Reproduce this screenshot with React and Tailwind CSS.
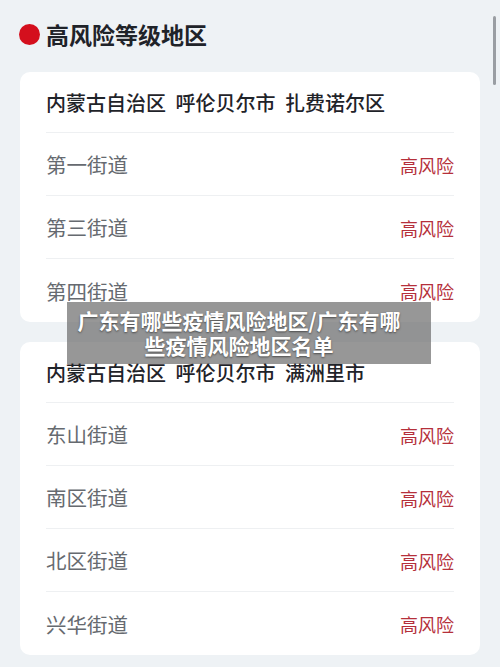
import React from "react";

const font = { fontFamily: '"Noto Sans CJK SC", "Noto Sans", sans-serif' };

const cards = [
  {
    title: "内蒙古自治区 呼伦贝尔市 扎费诺尔区",
    rows: ["第一街道", "第三街道", "第四街道"],
  },
  {
    title: "内蒙古自治区 呼伦贝尔市 满洲里市",
    rows: ["东山街道", "南区街道", "北区街道", "兴华街道"],
  },
];

function Card({ title, rows }) {
  return (
    <div className="bg-white rounded-[10px] mx-[20px] px-[26px]">
      <div className="h-[61px] flex items-center border-b border-[#eef0f2] text-[20px] font-medium text-[#1f2329] leading-none pt-[1px] [word-spacing:5px]">
        {title}
      </div>
      {rows.map((r, i) => (
        <div
          key={r}
          className={
            "h-[63px] flex items-center justify-between " +
            (i < rows.length - 1 ? "border-b border-[#eef0f2]" : "")
          }
        >
          <span className="text-[20.5px] text-[#666a70] leading-none pt-[1px]">{r}</span>
          <span className="text-[18px] text-[#b5303b] leading-none pt-[1px]">高风险</span>
        </div>
      ))}
    </div>
  );
}

export default function App() {
  return (
    <div className="relative w-[500px] h-[667px] bg-[#eef2f5] overflow-hidden" style={font}>
      <div className="absolute right-[4px] top-[16px] w-[3px] h-[69px] rounded-full bg-[#9a9ea3]" />
      <div className="flex items-center h-[70px] pl-[19px] pb-[2px]">
        <span className="w-[21px] h-[21px] rounded-full bg-[#d40f1d] mr-[6px]" />
        <span className="text-[23px] font-semibold text-[#1f2329] leading-none">高风险等级地区</span>
      </div>
      <div className="flex flex-col gap-[20px] pt-[2px]">
        {cards.map((c) => (
          <Card key={c.title} {...c} />
        ))}
      </div>
      <div className="absolute left-[67px] top-[302px] w-[364px] h-[62px] bg-[rgba(100,100,100,0.67)] pl-[8px] pr-[28px] flex flex-col items-center justify-center text-white font-bold text-[21px] leading-[25px]">
        <div style={{ textShadow: "0 1px 2px rgba(0,0,0,0.5)" }}>广东有哪些疫情风险地区/广东有哪</div>
        <div style={{ textShadow: "0 1px 2px rgba(0,0,0,0.5)" }}>些疫情风险地区名单</div>
      </div>
    </div>
  );
}
